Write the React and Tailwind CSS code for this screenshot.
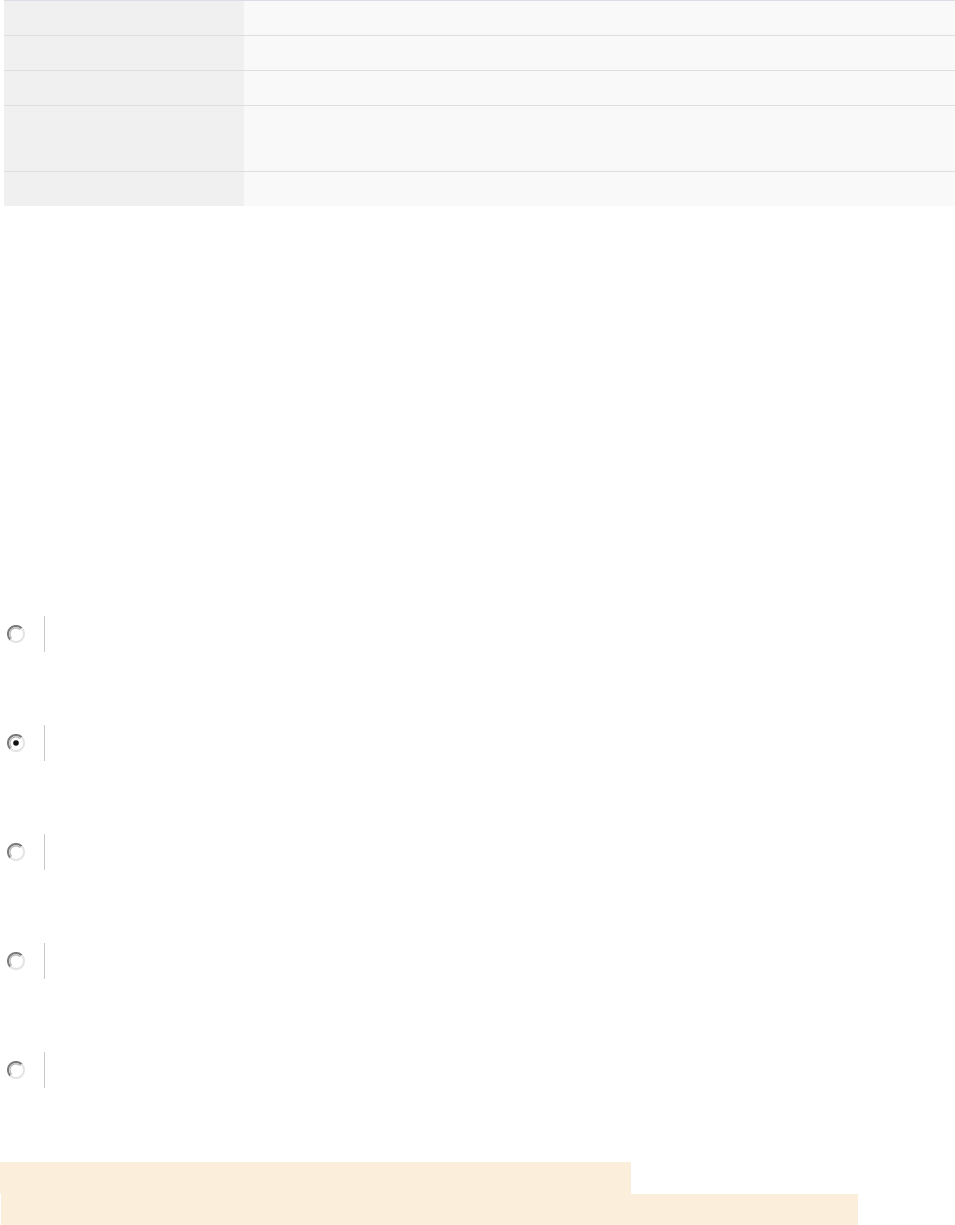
import React from "react";

// Old-style radio button
const Radio = ({ checked }) => (
  <svg width="18" height="18" viewBox="0 0 18 18" className="shrink-0">
    <circle cx="9" cy="9" r="8" fill="#ffffff" />
    <path d="M3.3 14.7 A8 8 0 0 1 14.7 3.3" fill="none" stroke="#7a7a7a" strokeWidth="2" />
    <path d="M14.7 3.3 A8 8 0 0 1 3.3 14.7" fill="none" stroke="#e4e4e4" strokeWidth="2" />
    <path d="M4.7 13.3 A6 6 0 0 1 13.3 4.7" fill="none" stroke="#b4b4b4" strokeWidth="1.2" />
    {checked && <circle cx="9" cy="9" r="2.8" fill="#111111" />}
  </svg>
);

const rows = [34, 34, 34, 65, 34];

export default function App() {
  return (
    <div className="min-h-[1225px] bg-white font-['Liberation_Sans',sans-serif]">
      {/* Info table */}
      <div className="ml-1 border-t border-[#dcdce4]">
        {rows.map((h, i) => (
          <div
            key={i}
            className={`flex ${i < rows.length - 1 ? "border-b border-[#dedede]" : ""}`}
          >
            <div className="w-[240px] bg-[#f0f0f0]" style={{ height: h }}></div>
            <div className="flex-1 bg-[#f9f9f9]"></div>
          </div>
        ))}
      </div>

      {/* Radio options */}
      <div className="mt-[410px] flex flex-col gap-[73px]">
        {[false, true, false, false, false].map((c, i) => (
          <div key={i} className="flex items-center h-9 pl-[7px]">
            <Radio checked={c} />
            <div className="ml-[19px] w-px h-9 bg-[#c8c8c8]"></div>
          </div>
        ))}
      </div>

      {/* Highlight bars */}
      <div className="mt-[74px]">
        <div className="w-[631px] h-8 bg-[#fbeedb]"></div>
        <div className="ml-px w-[857px] h-[31px] bg-[#fbeedb]"></div>
      </div>
    </div>
  );
}
